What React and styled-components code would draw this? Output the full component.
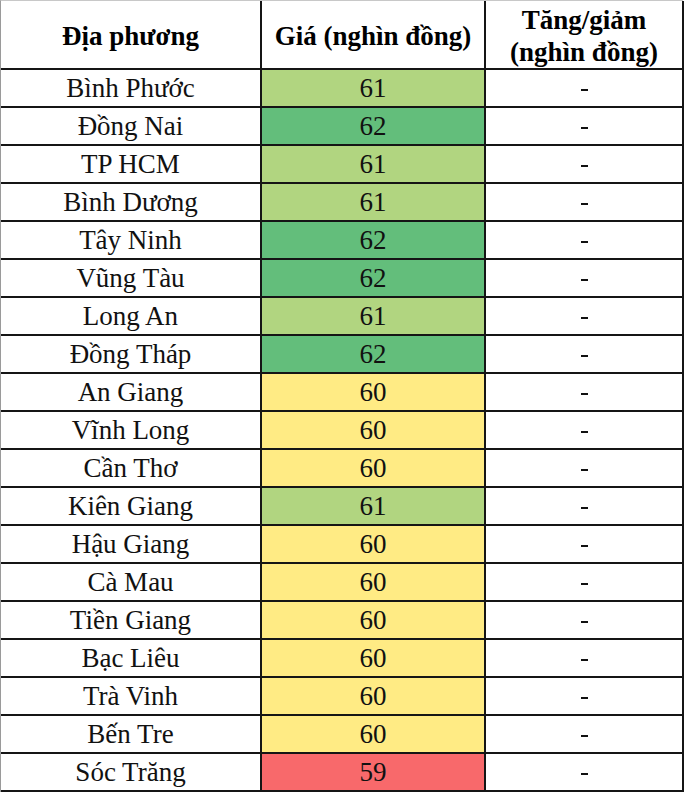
import React from "react";
import styled, { createGlobalStyle } from "styled-components";

const Global = createGlobalStyle`
  html, body { margin: 0; padding: 0; background: #fff; }
  body { font-family: "Liberation Serif", "Times New Roman", serif; color: #000; }
`;

const Table = styled.div`
  display: grid;
  grid-template-columns: 261px 224px 198px;
  grid-auto-rows: 38px;
  grid-template-rows: 69px;
  width: 683px;
  border-top: 1px solid #c8c8c8;
  border-left: 1px solid #9a9a9a;
  box-sizing: border-box;
  font-family: "Liberation Serif", "Times New Roman", serif;
`;

const Cell = styled.div`
  box-sizing: border-box;
  display: flex;
  align-items: center;
  justify-content: center;
  text-align: center;
  border-right: 2px solid #151515;
  border-bottom: 2px solid #151515;
  font-size: 27px;
  line-height: 1;
  color: #111;
  background: ${(p) => p.$bg || "#fff"};
`;

const HeadCell = styled(Cell)`
  font-weight: bold;
  font-size: 27px;
  line-height: 32px;
  padding-top: 2px;
  color: #000;
`;

const Dash = styled.span`
  display: inline-block;
  width: 7px;
  height: 2px;
  background: #111;
  margin-top: 4px;
`;

const COLORS = {
  59: "#F8696B",
  60: "#FFEB84",
  61: "#B1D580",
  62: "#63BE7B",
};

const rows = [
  ["Bình Phước", 61],
  ["Đồng Nai", 62],
  ["TP HCM", 61],
  ["Bình Dương", 61],
  ["Tây Ninh", 62],
  ["Vũng Tàu", 62],
  ["Long An", 61],
  ["Đồng Tháp", 62],
  ["An Giang", 60],
  ["Vĩnh Long", 60],
  ["Cần Thơ", 60],
  ["Kiên Giang", 61],
  ["Hậu Giang", 60],
  ["Cà Mau", 60],
  ["Tiền Giang", 60],
  ["Bạc Liêu", 60],
  ["Trà Vinh", 60],
  ["Bến Tre", 60],
  ["Sóc Trăng", 59],
];

export default function App() {
  return (
    <>
      <Global />
      <Table>
        <HeadCell>Địa phương</HeadCell>
        <HeadCell>Giá (nghìn đồng)</HeadCell>
        <HeadCell>
          Tăng/giảm
          <br />
          (nghìn đồng)
        </HeadCell>
        {rows.map(([name, price]) => (
          <React.Fragment key={name}>
            <Cell>{name}</Cell>
            <Cell $bg={COLORS[price]}>{price}</Cell>
            <Cell>
              <Dash />
            </Cell>
          </React.Fragment>
        ))}
      </Table>
    </>
  );
}
